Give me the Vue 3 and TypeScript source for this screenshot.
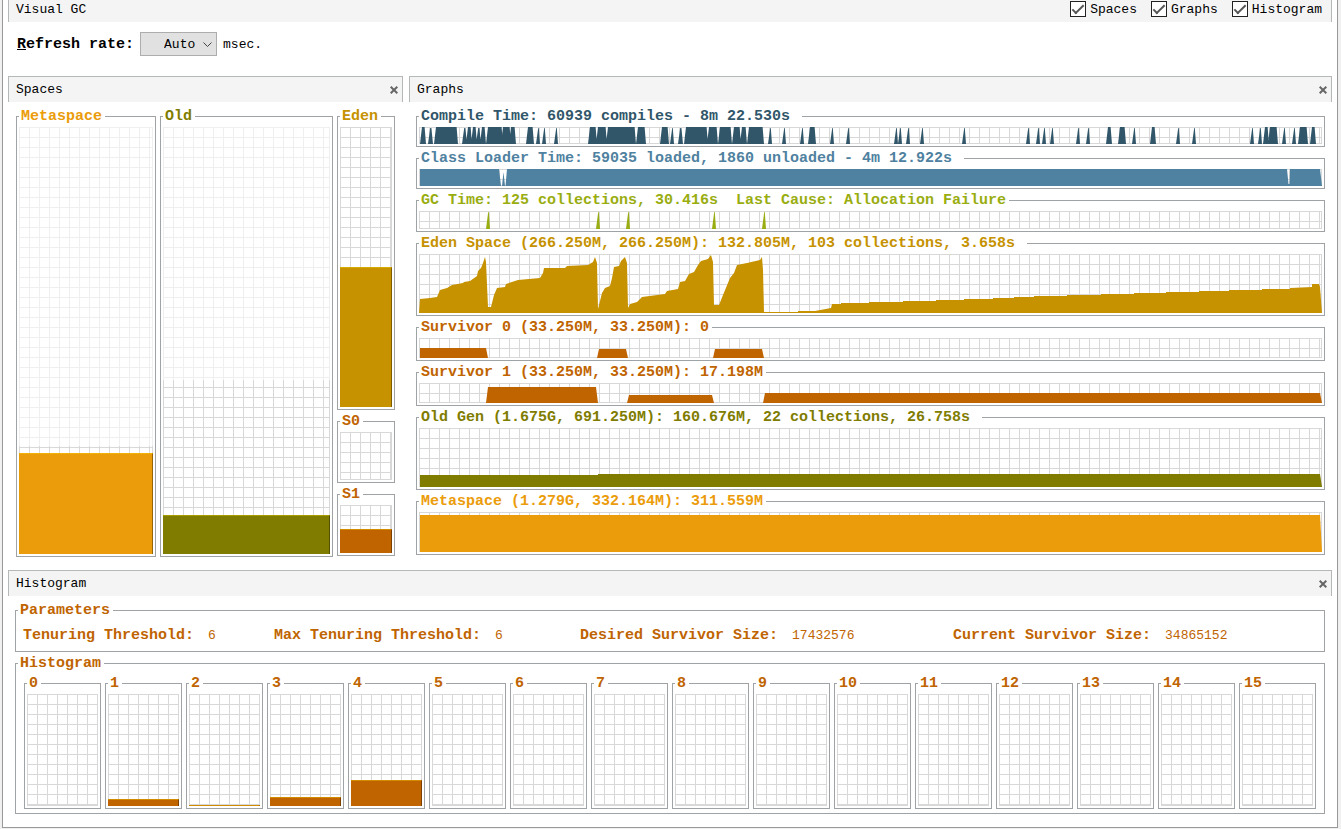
<script setup lang="ts">
import { ref } from 'vue'

interface Graph {
  title: string
  tone: string
  height: number
  path: string
}

interface Space {
  name: string
  tone: string
  size: string
  used: number
  reserved: number
}

const SPAN = 903

const showSpaces = ref(true)
const showGraphs = ref(true)
const showHistogram = ref(true)
const rate = ref('Auto')

const compileBursts: [number, number][] = [
  [1, 7], [9, 14], [15, 39], [43, 48], [47, 53], [52, 58], [57, 62], [61, 67],
  [67, 84], [82, 92], [90, 97], [107, 115], [117, 121], [123, 127], [135, 139],
  [169, 178], [177, 188], [187, 217], [217, 227], [241, 250], [251, 255],
  [259, 264], [265, 289], [288, 299], [299, 313], [313, 322], [321, 328],
  [328, 345], [349, 353], [363, 367], [381, 385], [389, 397], [411, 415],
  [427, 431], [475, 479], [479, 483], [487, 491], [501, 505], [543, 547],
  [607, 611], [617, 621], [623, 627], [631, 635], [657, 661], [667, 671],
  [687, 693], [699, 707], [713, 717], [731, 737], [757, 761], [773, 777],
  [831, 835], [839, 843], [844, 850], [849, 859], [863, 867], [873, 877],
  [879, 889], [891, 897],
]

const gcEvents: [number, number][] = [[67, 71], [177, 181], [207, 211], [293, 297], [343, 347]]

function bursts(list: [number, number][], height: number): string {
  return list
    .map(([from, to]) => {
      const inset = to - from > 5 ? 2 : 2.2
      const top = to - from > 5 ? 0 : 1
      return `M${from} ${height}L${from + inset} ${top}H${Math.max(to - inset + 0.6, from + inset + 0.6)}L${to} ${height}Z`
    })
    .join('')
}

const edenPath =
  'M0 59L1 45 11 44 18 43 21 36 28 34 33 31 44 29 45 28 51 27 58 22 59 17 62 14 64 9 66 3 67 8 69 53 72 53 73 49 75 41 78 34 86 33 87 30 99 26 121 24 124 19 125 14 146 14 148 12 169 11 174 8 176 3 178 9 179 55 180 51 183 39 186 34 191 32 193 24 195 13 200 12 202 7 206 3 208 9 209 54 211 50 218 48 223 43 246 40 248 37 259 35 261 28 266 27 270 20 275 18 279 11 282 7 289 5 292 1 294 8 295 51 300 51 304 41 311 24 315 19 318 11 328 9 341 6 343 3 344 16 345 58H379V57H396L412 54 413 50H422V49H450V48H484V47H517V46H545V45H574V44H595V43H615V42H648V41H682V40H715V39H747V38H780V37H810V36H843V35H871V34L893 33V30H900L901 33 903 59Z'

const graphs: Graph[] = [
  { title: 'Compile Time: 60939 compiles - 8m 22.530s ', tone: 'compile', height: 17, path: bursts(compileBursts, 17) },
  {
    title: 'Class Loader Time: 59035 loaded, 1860 unloaded - 4m 12.922s ',
    tone: 'loader',
    height: 17,
    path: 'M1 17V0H80L82 17H83L84.5 3 86 17H86.5L88 0H868L869.5 15H870.5L871 0H901L903 17Z',
  },
  { title: 'GC Time: 125 collections, 30.416s  Last Cause: Allocation Failure', tone: 'gc', height: 18, path: bursts(gcEvents, 18) },
  { title: 'Eden Space (266.250M, 266.250M): 132.805M, 103 collections, 3.658s ', tone: 'eden', height: 59, path: edenPath },
  {
    title: 'Survivor 0 (33.250M, 33.250M): 0',
    tone: 'survivor',
    height: 20,
    path: 'M1 20V10H67L69 20ZM178 20L180 11H207L209 20ZM294 20L296 11H343L345 20Z',
  },
  {
    title: 'Survivor 1 (33.250M, 33.250M): 17.198M',
    tone: 'survivor',
    height: 20,
    path: 'M67 20L69 4H177L179 20ZM208 20L210 12H293L295 20ZM344 20L346 10H901L903 20Z',
  },
  {
    title: 'Old Gen (1.675G, 691.250M): 160.676M, 22 collections, 26.758s ',
    tone: 'old',
    height: 59,
    path: 'M1 59V47H179V46H901L903 59Z',
  },
  { title: 'Metaspace (1.279G, 332.164M): 311.559M', tone: 'meta', height: 40, path: 'M1 40V3H901L903 40Z' },
]

const spaces: Space[] = [
  { name: 'Metaspace', tone: 'meta', size: 'tall', used: 23.6, reserved: 74.8 },
  { name: 'Old', tone: 'old', size: 'tall', used: 9.2, reserved: 59.2 },
]

const young: Space[] = [
  { name: 'Eden', tone: 'eden', size: 'medium', used: 50, reserved: 0 },
  { name: 'S0', tone: 'survivor', size: 'small', used: 0, reserved: 0 },
  { name: 'S1', tone: 'survivor', size: 'small', used: 50, reserved: 0 },
]

const parameters = [
  { label: 'Tenuring Threshold:', value: '6' },
  { label: 'Max Tenuring Threshold:', value: '6' },
  { label: 'Desired Survivor Size:', value: '17432576' },
  { label: 'Current Survivor Size:', value: '34865152' },
]

const ages = [0, 6.25, 1, 8.1, 23.3, 0, 0, 0, 0, 0, 0, 0, 0, 0, 0, 0]
</script>

<template>
  <main class="window">
    <header class="topbar">
      <span>Visual GC</span>
      <div class="toggles">
        <label class="toggle"><input v-model="showSpaces" type="checkbox"><span>Spaces</span></label>
        <label class="toggle"><input v-model="showGraphs" type="checkbox"><span>Graphs</span></label>
        <label class="toggle"><input v-model="showHistogram" type="checkbox"><span>Histogram</span></label>
      </div>
    </header>

    <div class="toolbar">
      <label class="rate-label" for="rate"><u>R</u>efresh rate:</label>
      <span class="rate">
        <select id="rate" v-model="rate">
          <option>Auto</option>
          <option>500</option>
          <option>1000</option>
        </select>
        <svg class="chevron" width="9" height="6" viewBox="0 0 9 6"><path d="M0.5 0.5 4.5 4.5 8.5 0.5" /></svg>
      </span>
      <span class="unit">msec.</span>
    </div>

    <div class="upper">
      <section v-show="showSpaces">
        <div class="panel-head">
          <span>Spaces</span>
          <button type="button" aria-label="Close Spaces" @click="showSpaces = false">
            <svg width="8" height="8" viewBox="0 0 8 8"><path d="M0.7 0.7 7.3 7.3M7.3 0.7 0.7 7.3" /></svg>
          </button>
        </div>
        <div class="spaces">
          <fieldset v-for="s in spaces" :key="s.name" class="box" :class="s.tone">
            <legend>{{ s.name }}</legend>
            <div class="grid" :class="s.size">
              <div class="reserved" :style="{ height: s.reserved + '%' }"></div>
              <div class="fill" :style="{ height: s.used + '%' }"></div>
            </div>
          </fieldset>
          <div class="young">
            <fieldset v-for="s in young" :key="s.name" class="box" :class="s.tone">
              <legend>{{ s.name }}</legend>
              <div class="grid" :class="s.size">
                <div v-if="s.used" class="fill" :style="{ height: s.used + '%' }"></div>
              </div>
            </fieldset>
          </div>
        </div>
      </section>

      <section v-show="showGraphs">
        <div class="panel-head">
          <span>Graphs</span>
          <button type="button" aria-label="Close Graphs" @click="showGraphs = false">
            <svg width="8" height="8" viewBox="0 0 8 8"><path d="M0.7 0.7 7.3 7.3M7.3 0.7 0.7 7.3" /></svg>
          </button>
        </div>
        <div class="graphs">
          <fieldset v-for="g in graphs" :key="g.title" class="box" :class="g.tone">
            <legend>{{ g.title }}</legend>
            <div class="grid">
              <svg class="plot" :height="g.height" :viewBox="`0 0 ${SPAN} ${g.height}`" preserveAspectRatio="none">
                <path :d="g.path" />
              </svg>
            </div>
          </fieldset>
        </div>
      </section>
    </div>

    <section v-show="showHistogram">
      <div class="panel-head">
        <span>Histogram</span>
        <button type="button" aria-label="Close Histogram" @click="showHistogram = false">
          <svg width="8" height="8" viewBox="0 0 8 8"><path d="M0.7 0.7 7.3 7.3M7.3 0.7 0.7 7.3" /></svg>
        </button>
      </div>
      <div class="histogram">
        <fieldset class="box survivor">
          <legend>Parameters</legend>
          <dl class="params">
            <div v-for="p in parameters" :key="p.label">
              <dt>{{ p.label }}</dt>
              <dd>{{ p.value }}</dd>
            </div>
          </dl>
        </fieldset>
        <fieldset class="box survivor">
          <legend>Histogram</legend>
          <div class="ages">
            <fieldset v-for="(used, age) in ages" :key="age" class="box survivor">
              <legend>{{ age }}</legend>
              <div class="grid age">
                <div v-if="used" class="fill" :style="{ height: used + '%' }"></div>
              </div>
            </fieldset>
          </div>
        </fieldset>
      </div>
    </section>
  </main>
</template>

<style>
body {
  margin: 0;
  background: #f0f0f0;
}
</style>

<style scoped>
.window {
  margin: 0 3px 0 2px;
  padding: 0 5px 13px;
  border: 1px solid #999;
  border-top: 0;
  background: #fff;
  color: #000;
  font-family: "Liberation Mono", "Courier New", monospace;
  font-size: 13px;
  line-height: 20px;
}

.topbar {
  display: flex;
  justify-content: space-between;
  box-sizing: border-box;
  height: 22px;
  padding: 0 9px 0 7px;
  border: solid #b4b8b8;
  border-width: 0 1px;
  background: #f4f4f4;
}

.toggles {
  display: flex;
  gap: 14px;
}

.toggle {
  display: flex;
  gap: 4px;
}

.toggle input {
  appearance: none;
  box-sizing: border-box;
  width: 16px;
  height: 16px;
  margin: 1px 0 0;
  border: 1px solid #222;
  background: #fff;
}

.toggle input:checked::before {
  content: "";
  display: block;
  box-sizing: border-box;
  width: 12px;
  height: 6px;
  margin: 3px 0 0 1px;
  border: solid #555;
  border-width: 0 0 2px 2px;
  transform: rotate(-45deg);
}

.toolbar {
  display: flex;
  align-items: center;
  gap: 6px;
  padding: 10px 9px 20px;
}

.rate-label,
.unit {
  padding-top: 2px;
}

.rate-label {
  font-size: 15px;
  font-weight: bold;
}

.rate {
  position: relative;
  display: flex;
}

.rate select {
  appearance: none;
  box-sizing: border-box;
  width: 77px;
  height: 24px;
  padding: 2px 0 0 23px;
  border: 1px solid #adadad;
  border-radius: 0;
  background: #e1e1e1;
  color: #000;
  font: inherit;
}

.chevron {
  position: absolute;
  top: 10px;
  right: 5px;
  pointer-events: none;
}

.chevron path {
  fill: none;
  stroke: #444;
}

.upper {
  display: grid;
  grid-template-columns: 395fr 923fr;
  gap: 6px;
  margin-bottom: 13px;
}

.panel-head {
  display: flex;
  align-items: center;
  justify-content: space-between;
  box-sizing: border-box;
  height: 26px;
  padding: 0 4px 0 7px;
  border: 1px solid #b4b8b8;
  border-bottom: 0;
  background: #f4f4f4;
}

.panel-head button {
  display: flex;
  padding: 0;
  border: 0;
  background: none;
}

.panel-head path {
  fill: none;
  stroke: #666;
  stroke-width: 2;
}

.spaces {
  display: grid;
  grid-template-columns: 140fr 173fr 58fr;
  align-items: start;
  gap: 4px;
  padding: 5px 8px 0;
}

.young,
.graphs,
.histogram {
  display: flex;
  flex-direction: column;
  gap: 2px;
}

.graphs,
.histogram {
  padding: 5px 7px 0;
}

.box {
  min-width: 0;
  margin: 0;
  padding: 1px 2px 2px;
  border: 1px solid #a0a3a6;
}

.box legend {
  height: 19px;
  padding: 0 3px 0 2px;
  color: var(--tone);
  font-size: 15px;
  font-weight: bold;
  line-height: 20px;
  white-space: pre;
}

.compile { --tone: #31566a; }
.loader { --tone: #4f81a0; }
.gc { --tone: #99ad10; }
.eden { --tone: #c69200; }
.survivor { --tone: #c06400; }
.old { --tone: #807c00; }
.meta { --tone: #eb9c0a; }

.grid {
  position: relative;
  background-image:
    linear-gradient(to right, #d8d8d8 1px, transparent 1px),
    linear-gradient(to bottom, #d8d8d8 1px, transparent 1px);
  background-size: 10px 10px;
  box-shadow: inset -1px -1px #d8d8d8;
}

.tall { height: 427px; }
.medium { height: 280px; }
.small { height: 48px; }
.age { height: 112px; }

.reserved {
  background: rgba(255, 255, 255, 0.6);
}

.fill {
  position: absolute;
  right: 0;
  bottom: 0;
  left: 0;
  box-sizing: border-box;
  border-top: 1px solid rgba(255, 230, 0, 0.3);
  border-right: 1px solid rgba(0, 0, 0, 0.35);
  background: var(--tone);
}

.plot {
  display: block;
  width: 100%;
}

.plot path {
  fill: var(--tone);
}

.params {
  display: grid;
  grid-template-columns: 251fr 306fr 373fr 369fr;
  margin: 0;
  padding: 2px 0 0 5px;
  color: var(--tone);
  line-height: 26px;
}

.params div {
  display: flex;
  gap: 14px;
}

.params dt {
  font-size: 15px;
  font-weight: bold;
}

.params dd {
  margin: 0;
}

.ages {
  display: grid;
  grid-template-columns: repeat(16, minmax(0, 1fr));
  gap: 4px;
  padding: 0 6px 2px;
}
</style>
